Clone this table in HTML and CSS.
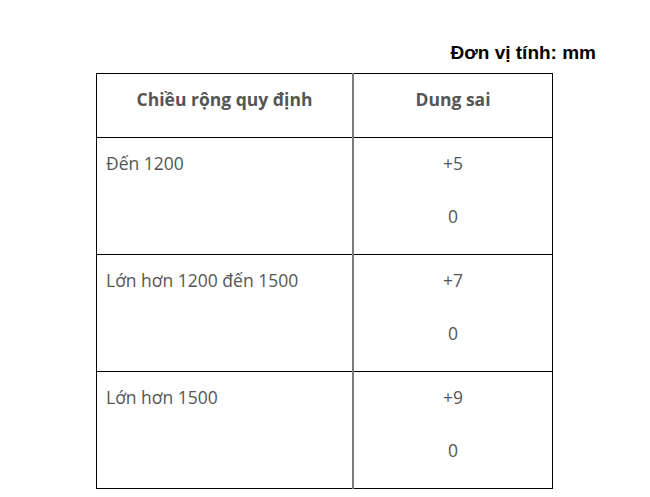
FILE: index.html
```html
<!DOCTYPE html>
<html lang="vi">
<head>
<meta charset="utf-8">
<title>Dung sai chiều rộng</title>
<link rel="stylesheet" href="styles.css">
</head>
<body>
<div class="wrap">
  <p class="unit">Đơn vị tính: mm</p>
  <table class="spec">
    <thead>
      <tr>
        <th class="c1"><p>Chiều rộng quy định</p></th>
        <th class="c2"><p>Dung sai</p></th>
      </tr>
    </thead>
    <tbody>
      <tr>
        <td class="c1"><p>Đến 1200</p></td>
        <td class="c2"><p>+5</p><p>0</p></td>
      </tr>
      <tr>
        <td class="c1"><p>Lớn hơn 1200 đến 1500</p></td>
        <td class="c2"><p>+7</p><p>0</p></td>
      </tr>
      <tr>
        <td class="c1"><p>Lớn hơn 1500</p></td>
        <td class="c2"><p>+9</p><p>0</p></td>
      </tr>
    </tbody>
  </table>
</div>
</body>
</html>
```

FILE: styles.css
```css
html, body {
  margin: 0;
  padding: 0;
  background: #fff;
}

.wrap {
  width: 500px;
  margin-left: 96px;
  padding-top: 42px;
}

.unit {
  margin: 0 0 9px;
  text-align: right;
  font-family: "Liberation Sans", Arial, sans-serif;
  font-weight: bold;
  font-size: 19px;
  line-height: 22px;
  color: #000;
}

.spec {
  width: 457px;
  border-collapse: collapse;
  border: 1px solid #000;
  font-family: "Open Sans", sans-serif;
  font-size: 17.5px;
  line-height: 26px;
  color: #555;
}

.spec th,
.spec td {
  border: 1px solid #000;
  padding: 12px 9px 25px;
  vertical-align: top;
}

.spec th {
  font-weight: bold;
  text-align: center;
}

.spec td.c1 {
  text-align: left;
}

.spec td.c2 {
  text-align: center;
}

.spec .c1 {
  width: 237px;
}

.spec .c2 {
  border-left: 2px solid #7d7d7d;
}

.spec p {
  margin: 0;
}

.spec p + p {
  margin-top: 27px;
}
```
